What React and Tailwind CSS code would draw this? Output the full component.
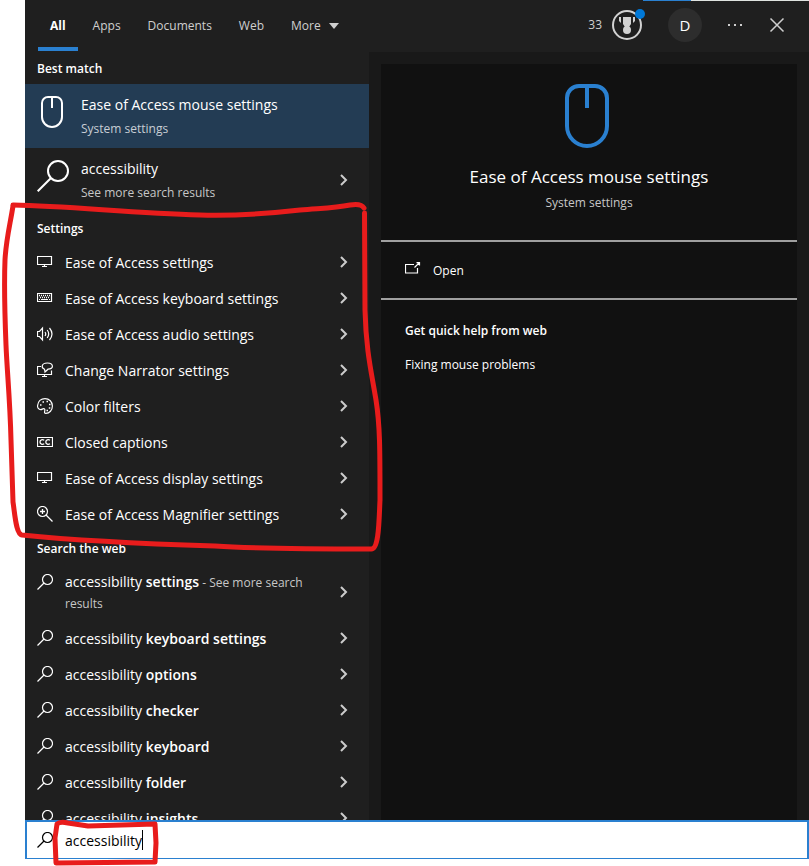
import React, { useState } from "react";

const TABS = ["All", "Apps", "Documents", "Web"];

const SETTINGS = [
    { label: "Ease of Access settings", icon: "monitor" },
    { label: "Ease of Access keyboard settings", icon: "keyboard" },
    { label: "Ease of Access audio settings", icon: "audio" },
    { label: "Change Narrator settings", icon: "narrator" },
    { label: "Color filters", icon: "palette" },
    { label: "Closed captions", icon: "captions" },
    { label: "Ease of Access display settings", icon: "monitor" },
    { label: "Ease of Access Magnifier settings", icon: "magnifier" },
];

const WEB_RESULTS = ["keyboard settings", "options", "checker", "keyboard", "folder", "insights"];

const ICONS = {
    monitor: (
        <>
            <path d="M0.5 2.5h14v8h-14z" />
            <path d="M7.5 10.5v2M5 12.5h5" />
        </>
    ),
    keyboard: (
        <>
            <path d="M0.5 3.5h14v8h-14z" />
            <path d="M2 5.5h11M3 7.5h10" strokeDasharray="1 1" strokeWidth="1.4" />
            <path d="M2 9.5h1M4 9.5h7M12 9.5h1" />
        </>
    ),
    audio: (
        <>
            <path d="M0.5 5.5h2l3-3.5v12l-3-3.5h-2z" />
            <path d="M8 6q1.5 2 0 4M10.2 4q3 4 0 8M12.5 2q5 6 0 12" />
        </>
    ),
    narrator: (
        <>
            <path d="M4 4.5H0.5v8h14v-4" />
            <path d="M7.5 12.5v2M5 14.5h5" />
            <path d="M8 10l-.5-2.8C5.8 6.4 5 5.5 5.2 4c.3-1.9 2.5-3 5.2-3s5 1.1 5 3.2S13 7 11 7.2z" />
        </>
    ),
    palette: (
        <>
            <path d="M0.6 7.5C1 3.5 4 0.6 8 0.6c4.2 0 7.4 3.2 7.4 7.4s-3 7.4-6.5 7.4c-1.5 0-1.5-1-1.2-2.2.4-1.7 0-2.5-1.2-2.5-1 0-1.5.9-2.7.9C1.7 11.6 0.3 10 0.6 7.5z" />
            <path d="M3 7h1.5M5.5 4H7M9.5 3.5H11M12 6.5h1.5M11.8 10h1.5M9.5 12.5H11" strokeWidth="1.6" />
        </>
    ),
    captions: (
        <>
            <path d="M0.5 3.5h15v9h-15z" />
            <path d="M7.2 6.3C5.5 5.2 3 5.7 3 8s2.5 2.8 4.2 1.7M13 6.3C11.3 5.2 8.8 5.7 8.8 8s2.5 2.8 4.2 1.7" strokeWidth="1.3" />
        </>
    ),
    magnifier: (
        <>
            <circle cx="5.5" cy="5.5" r="5" />
            <path d="M9 9l6.5 6.5M3 5.5h5M5.5 3v5" strokeWidth="1.3" />
        </>
    ),
    search: (
        <>
            <circle cx="10.5" cy="5.5" r="5" />
            <path d="M7 9L0.5 15.5" />
        </>
    ),
};

const SmallIcon = ({ name }) => (
    <svg className="size-4 shrink-0" viewBox="0 0 16 16" fill="none" stroke="currentColor" strokeWidth="1.2" aria-hidden="true">
        {ICONS[name]}
    </svg>
);

const MouseIcon = ({ className }) => (
    <svg className={className} viewBox="0 0 32 32" fill="none" stroke="currentColor" strokeWidth="2" aria-hidden="true">
        <path d="M11 1h8a6 6 0 0 1 6 6v14a10 10 0 0 1-20 0V7a6 6 0 0 1 6-6z" />
        <path d="M15 1v11" />
    </svg>
);

const Chevron = () => (
    <svg className="h-3 w-2 shrink-0 text-[#cccccc]" viewBox="0 0 8 12" fill="none" stroke="currentColor" strokeWidth="2" aria-hidden="true">
        <path d="M1 1l5 5-5 5" />
    </svg>
);

const SectionTitle = ({ children }) => (
    <h2 className="h-8 px-3 text-xs leading-[34px] font-semibold text-white">{children}</h2>
);

const ResultRow = ({ icon, children }) => (
    <li>
        <button type="button" className="flex min-h-9 w-full items-center gap-3 pr-[21px] pl-3 text-left text-sm text-white">
            <SmallIcon name={icon} />
            <span className="flex-1 pt-[2px]">{children}</span>
            <Chevron />
        </button>
    </li>
);

const Header = () => (
    <header className="flex h-13 shrink-0 items-start justify-between bg-[#1f1f1f] text-[#cfcfcf]">
        <nav className="flex gap-[3px] pl-[13px] text-xs">
            {TABS.map((tab, index) => (
                <button
                    key={tab}
                    type="button"
                    className={
                        index === 0
                            ? "h-[51px] border-b-4 border-[#2a80d0] px-3 pt-1 font-bold text-white"
                            : "h-[51px] border-b-4 border-transparent px-3 pt-1"
                    }
                >
                    {tab}
                </button>
            ))}
            <button type="button" className="flex h-[51px] items-center gap-2 border-b-4 border-transparent px-3 pt-1">
                More
                <svg className="h-[6px] w-[10px]" viewBox="0 0 10 6" fill="currentColor" aria-hidden="true">
                    <path d="M0 0h10L5 6z" />
                </svg>
            </button>
        </nav>

        <div className="flex h-[50px] items-center">
            <button type="button" className="flex items-center gap-[9px] text-xs" aria-label="33 rewards points">
                33
                <svg className="h-8 w-9" viewBox="0 0 36 32" aria-hidden="true">
                    <circle cx="16" cy="16" r="14" fill="none" stroke="#d2d2d2" strokeWidth="2" />
                    <path d="M12 8h8v7l-2 3h-4l-2-3zM8 8h2v6l-2-2zM22 8h2v4l-2 2z" fill="#d2d2d2" />
                    <circle cx="16" cy="21" r="4" fill="#d2d2d2" />
                    <circle cx="29" cy="5" r="5" fill="#0078d7" />
                </svg>
            </button>
            <button type="button" className="ml-[21px] size-[34px] rounded-full bg-[#2d2d2d] text-[15px] text-white">
                D
            </button>
            <button type="button" className="ml-[23px] p-[2px]" aria-label="Options">
                <svg className="h-4 w-4" viewBox="0 0 16 16" fill="currentColor" aria-hidden="true">
                    <path d="M1 7h2v2H1zM7 7h2v2H7zM13 7h2v2h-2z" />
                </svg>
            </button>
            <button type="button" className="mr-[23px] ml-[23px] p-[1px]" aria-label="Close">
                <svg className="h-4 w-4" viewBox="0 0 16 16" fill="none" stroke="currentColor" strokeWidth="1.5" aria-hidden="true">
                    <path d="M1.5 1.5l13 13M14.5 1.5l-13 13" />
                </svg>
            </button>
        </div>
    </header>
);

const Results = () => (
    <div className="w-[344px] shrink-0 overflow-hidden bg-[#1f1f1f]">
        <SectionTitle>Best match</SectionTitle>
        <button type="button" className="flex h-16 w-full items-center gap-3 bg-[#233c54] pr-[21px] pl-3 text-left text-white">
            <MouseIcon className="mt-3 size-8 shrink-0 self-start" />
            <span className="flex-1 pt-[2px]">
                <span className="block text-sm leading-6">Ease of Access mouse settings</span>
                <span className="block text-xs leading-6 text-[#c8ced4]">System settings</span>
            </span>
        </button>
        <button type="button" className="flex h-16 w-full items-center gap-3 pr-[21px] pl-3 text-left text-white">
            <svg className="mt-3 size-8 shrink-0 self-start" viewBox="0 0 32 32" fill="none" stroke="currentColor" strokeWidth="2" aria-hidden="true">
                <circle cx="21" cy="11" r="10" />
                <path d="M14 18L0.7 31.3" />
            </svg>
            <span className="flex-1 pt-[2px]">
                <span className="block text-sm leading-6">accessibility</span>
                <span className="block text-xs leading-6 text-[#c7c7c7]">See more search results</span>
            </span>
            <Chevron />
        </button>

        <SectionTitle>Settings</SectionTitle>
        <ul>
            {SETTINGS.map((item) => (
                <ResultRow key={item.label} icon={item.icon}>
                    {item.label}
                </ResultRow>
            ))}
        </ul>

        <SectionTitle>Search the web</SectionTitle>
        <ul>
            <li>
                <button type="button" className="flex min-h-14 w-full items-center gap-3 pr-[21px] pl-3 text-left text-sm text-white">
                    <span className="self-start pt-[10px]">
                        <SmallIcon name="search" />
                    </span>
                    <span className="flex-1 pt-[2px] pr-4 leading-5">
                        accessibility <b className="font-semibold">settings</b>
                        <span className="text-xs leading-5 text-[#c7c7c7]"> - See more search results</span>
                    </span>
                    <Chevron />
                </button>
            </li>
            {WEB_RESULTS.map((term) => (
                <ResultRow key={term} icon="search">
                    accessibility <b className="font-semibold">{term}</b>
                </ResultRow>
            ))}
        </ul>
    </div>
);

const Preview = () => (
    <div className="flex flex-1 flex-col bg-[#191919] px-3 pt-3">
        <div className="flex-1 bg-[#111111] text-white">
            <div className="flex flex-col items-center pt-5 pb-6">
                <MouseIcon className="size-16 text-[#2a80d0]" />
                <h1 className="mt-[17px] text-[17px] leading-6">Ease of Access mouse settings</h1>
                <p className="text-xs leading-[27px] text-[#c7c7c7]">System settings</p>
            </div>
            <div className="border-y-2 border-[#a0a0a0]">
                <button type="button" className="flex h-14 w-full items-center gap-3 px-6 text-left text-xs">
                    <svg className="size-4" viewBox="0 0 16 16" fill="none" stroke="currentColor" strokeWidth="1.2" aria-hidden="true">
                        <path d="M9 2.5H0.5v8.5h12v-5" />
                        <path d="M9.5 5.5l5-5M11.5 0.6h3v3" />
                    </svg>
                    <span className="pt-[2px]">Open</span>
                </button>
            </div>
            <div className="px-6 pt-[21px]">
                <h3 className="text-xs leading-5 font-semibold">Get quick help from web</h3>
                <a href="#mouse-problems" className="mt-[14px] block text-xs leading-5">
                    Fixing mouse problems
                </a>
            </div>
        </div>
    </div>
);

const App = () => {
    const [query, setQuery] = useState("accessibility");

    return (
        <div className="relative flex h-screen flex-col overflow-hidden bg-white pb-[7px] pl-[25px] font-['Open_Sans','Noto_Sans',sans-serif]">
            <Header />
            <main className="flex min-h-0 flex-1">
                <Results />
                <Preview />
            </main>
            <label className="flex h-[39px] shrink-0 items-center border-2 border-b border-[#2a80d0] bg-white pl-[10px] text-sm text-black">
                <SmallIcon name="search" />
                <input
                    type="text"
                    aria-label="Search"
                    value={query}
                    onChange={(e) => setQuery(e.target.value)}
                    className="ml-3 field-sizing-content pt-[2px] caret-transparent outline-none"
                />
                <span className="h-5 w-px bg-black"></span>
            </label>

            {/* strip of the window behind */}
            <div className="absolute top-0 right-0 flex h-px w-[166px]">
                <div className="w-12 bg-[#2a80d0]"></div>
                <div className="flex-1 bg-[#dfe3e0]"></div>
            </div>

            {/* hand-drawn marks */}
            <svg
                className="pointer-events-none absolute top-[200px] left-0 h-[360px] w-[390px]"
                viewBox="0 200 390 360"
                fill="none"
                stroke="#e81c1c"
                strokeWidth="5"
                strokeLinecap="round"
                strokeLinejoin="round"
                aria-hidden="true"
            >
                <path d="M13 205C70 206 130 213 200 215C235 216 265 214 300 210C325 208 335 208 350 205Q361 203 364 208" />
                <path d="M364.5 213L365 310C366 350 371 370 376 400C380 425 380 450 380 500C379 520 379 550 371 549C320 549 260 549 215 546C150 544 80 541 22 535C16 534 15 515 13 502L11 440C10 400 7 370 6 345C5 320 4 285 5 260C6 240 10 225 13 206" />
            </svg>
            <svg
                className="pointer-events-none absolute bottom-0 left-[50px] h-12 w-[112px]"
                viewBox="50 818 112 48"
                fill="none"
                stroke="#e81c1c"
                strokeWidth="5"
                strokeLinecap="round"
                strokeLinejoin="round"
                aria-hidden="true"
            >
                <path d="M57 824Q60 821 68 823L88 826L155 824L156 843L155 862L56 863L55 838z" />
            </svg>
        </div>
    );
};

export default App;
